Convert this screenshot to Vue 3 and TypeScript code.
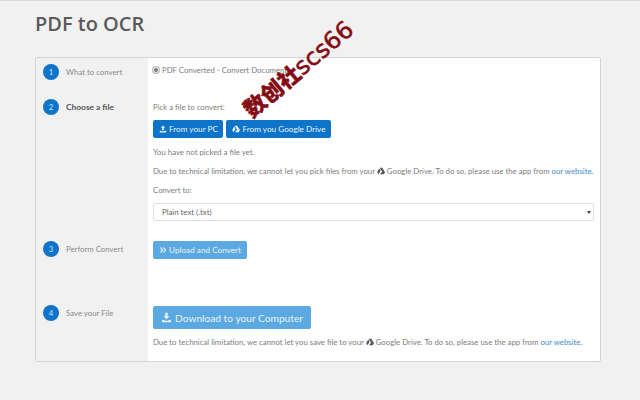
<script setup lang="ts">
const steps = { pick: 'Pick a file to convert:' }
const drive = 'M5.4 1.5h5.2L16 10.6h-5.2zM4.6 2.9 7.2 7.4 3 14.5.4 10.2zM6.2 14.5l2.5-4.2H16l-2.6 4.2z'
</script>

<template>
  <div class="page">
    <h1 class="title">PDF to OCR</h1>
    <div class="card">
      <div class="row row-1">
        <div class="side"><span class="num">1</span><span class="label">What to convert</span></div>
        <div class="main">
          <label class="radio"><span class="dot"></span>PDF Converted - Convert Document</label>
        </div>
      </div>
      <div class="row row-2">
        <div class="side"><span class="num">2</span><span class="label active">Choose a file</span></div>
        <div class="main">
          <p class="line pick">{{ steps.pick }}</p>
          <div class="btns">
            <button class="btn">
              <svg class="ico" viewBox="0 0 16 16"><path d="M8 1 3.6 5.6h2.7v5h3.4v-5h2.7zM1.5 11.6h3.2v1h6.6v-1h3.2V15h-13z" /></svg>
              From your PC
            </button>
            <button class="btn">
              <svg class="ico" viewBox="0 0 16 16"><path :d="drive" /></svg>
              From you Google Drive
            </button>
          </div>
          <p class="line none">You have not picked a file yet.</p>
          <p class="line tech">
            Due to technical limitation, we cannot let you pick files from your
            <svg class="ico dark" viewBox="0 0 16 16"><path :d="drive" /></svg>
            Google Drive. To do so, please use the app from <a class="link">our website.</a>
          </p>
          <p class="line conv">Convert to:</p>
          <div class="select">Plain text (.txt)<span class="caret"></span></div>
        </div>
      </div>
      <div class="row row-3">
        <div class="side"><span class="num">3</span><span class="label">Perform Convert</span></div>
        <div class="main">
          <button class="btn light">
            <svg class="ico" viewBox="0 0 16 16"><path d="M1.5 3h3l4 5-4 5h-3l4-5zM7.5 3h3l4 5-4 5h-3l4-5z" /></svg>
            Upload and Convert
          </button>
        </div>
      </div>
      <div class="row row-4">
        <div class="side"><span class="num">4</span><span class="label">Save your File</span></div>
        <div class="main">
          <button class="btn light big">
            <svg class="ico" viewBox="0 0 16 16"><path d="M6.3 1h3.4v5h2.7L8 10.6 3.6 6h2.7zM1.5 11.6h3.2l1 1h4.6l1-1h3.2V15h-13z" /></svg>
            Download to your Computer
          </button>
          <p class="line save">
            Due to technical limitation, we cannot let you save file to your
            <svg class="ico dark" viewBox="0 0 16 16"><path :d="drive" /></svg>
            Google Drive. To do so, please use the app from <a class="link">our website.</a>
          </p>
        </div>
      </div>
      <div class="mark"><span class="cjk">数创社</span><span class="latin">scs66</span></div>
    </div>
  </div>
</template>

<style>
html, body { margin: 0; background: #f1f1f1; }
</style>

<style scoped>
.page {
  width: 640px;
  height: 400px;
  box-sizing: border-box;
  padding: 0 39px 0 35px;
  border-top: 1px solid #d9d9d9;
  background: #f1f1f1;
  font-family: Lato, "Noto Sans CJK SC", sans-serif;
  font-size: 7.8px;
  color: #7d7d7d;
  overflow: hidden;
}
.title {
  margin: 0;
  height: 56px;
  padding-top: 10px;
  box-sizing: border-box;
  font-family: "Open Sans", sans-serif;
  font-size: 20px;
  line-height: 25px;
  font-weight: 600;
  color: #5a5a5a;
}
.card {
  position: relative;
  border: 1px solid #d4d4d4;
  border-radius: 2px;
  background: #fff;
  height: 305px;
  box-sizing: border-box;
}
.row { display: flex; }
.row-1 { height: 35px; }
.row-2 { height: 142px; }
.row-3 { height: 64px; }
.row-4 { height: 62px; }
.side {
  width: 112px;
  flex: none;
  box-sizing: border-box;
  padding: 6px 0 0 7px;
  background: #f1f1f1;
  display: flex;
  align-items: flex-start;
  gap: 7px;
}
.num {
  width: 16px;
  height: 16px;
  border-radius: 50%;
  background: #0d74c9;
  color: #cfe3f5;
  text-align: center;
  line-height: 16px;
  flex: none;
}
.label { line-height: 16px; color: #8a8a8a; }
.label.active { font-size: 8.4px; font-weight: 700; color: #555; }
.main { flex: 1; padding-left: 5px; min-width: 0; }
.line { margin: 0; line-height: 12px; white-space: nowrap; }
.radio { display: flex; align-items: center; gap: 3px; height: 12px; margin-top: 6px; }
.dot {
  width: 4px;
  height: 4px;
  border-radius: 50%;
  background: #777;
  border: 1px solid #f4f4f4;
  box-shadow: 0 0 0 1px #bbb;
}
.pick { padding-top: 8px; }
.btns { display: flex; gap: 3px; margin-top: 7px; }
.btn {
  display: inline-flex;
  align-items: center;
  gap: 2.5px;
  height: 18px;
  padding: 0 5.5px 1px;
  border: 0;
  border-radius: 2px;
  background: #0d74c9;
  color: #eaf3fb;
  font: inherit;
  font-size: 8.2px;
}
.btn.light { background: #5ba9e0; }
.btn.big { height: 23px; padding: 0 8px; font-size: 10.2px; gap: 3px; }
.big .ico { width: 11px; height: 11px; }
.ico { width: 8px; height: 8px; fill: currentColor; flex: none; }
.ico.dark { color: #555; vertical-align: -1px; }
.none { margin-top: 8px; }
.tech { margin-top: 7px; }
.conv { margin-top: 7px; }
.link { color: #3c8dc5; }
.select {
  position: relative;
  margin: 7px 6px 0 0;
  height: 18px;
  box-sizing: border-box;
  border: 1px solid #ddd;
  border-radius: 2px;
  padding-left: 8px;
  line-height: 17px;
  color: #666;
}
.caret {
  position: absolute;
  right: 2px;
  top: 7px;
  border: 2px solid transparent;
  border-top: 3px solid #444;
  border-bottom: 0;
}
.row-3 .btn { margin-top: 6px; }
.row-4 .btn { margin-top: 7px; }
.save { margin-top: 7px; }
.mark {
  position: absolute;
  left: 196px;
  top: -6px;
  transform: rotate(-40deg);
  line-height: 30px;
  color: #840b14;
  white-space: nowrap;
}
.cjk { font-family: "Noto Sans CJK SC", sans-serif; font-size: 22px; font-weight: 900; -webkit-text-stroke: 0.4px #840b14; }
.latin { font-family: "DejaVu Sans", sans-serif; font-size: 24px; font-weight: 400; -webkit-text-stroke: 0.5px #840b14; }
</style>
